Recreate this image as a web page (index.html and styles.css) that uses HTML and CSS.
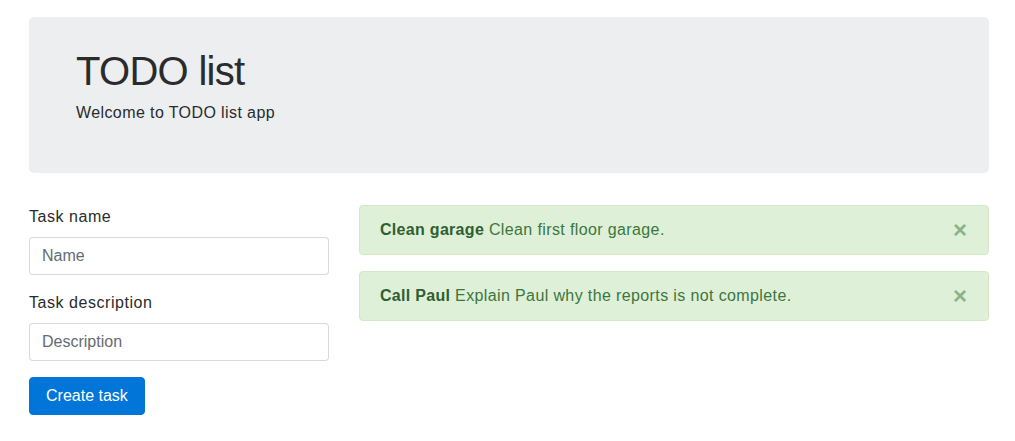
FILE: index.html
```html
<!DOCTYPE html>
<html lang="en">
<head>
<meta charset="utf-8">
<title>TODO list</title>
<link rel="stylesheet" href="styles.css">
</head>
<body>
<div class="container">
  <header class="jumbotron">
    <h1 class="title">TODO list</h1>
    <p class="lead">Welcome to TODO list app</p>
  </header>
  <div class="row">
    <form class="task-form">
      <div class="form-group">
        <label class="label" for="name">Task name</label>
        <input class="input" id="name" type="text" placeholder="Name">
      </div>
      <div class="form-group">
        <label class="label" for="desc">Task description</label>
        <input class="input" id="desc" type="text" placeholder="Description">
      </div>
      <button class="btn" type="button">Create task</button>
    </form>
    <div class="tasks">
      <div class="alert">
        <span class="alert-text"><strong>Clean garage</strong> Clean first floor garage.</span>
        <button class="close" type="button" aria-label="Close">×</button>
      </div>
      <div class="alert">
        <span class="alert-text"><strong>Call Paul</strong> Explain Paul why the reports is not complete.</span>
        <button class="close" type="button" aria-label="Close">×</button>
      </div>
    </div>
  </div>
</div>
</body>
</html>
```

FILE: styles.css
```css
* { box-sizing: border-box; }
html, body {
  margin: 0;
  padding: 0;
  background: #fff;
}
body {
  font-family: "Liberation Sans", Arial, sans-serif;
  font-size: 16px;
  line-height: 1.5;
  color: #292b2c;
}
.container {
  width: 960px;
  margin-left: 29px;
  padding-top: 17px;
}
.jumbotron {
  background: #eceeef;
  border-radius: 5px;
  padding: 32px 47px;
  margin-bottom: 32px;
}
.title {
  margin: 0 0 8px;
  font-size: 40px;
  font-weight: 400;
  line-height: 1.1;
  letter-spacing: -0.7px;
  color: #292b2c;
}
.lead {
  margin: 0 0 16px;
  font-size: 16px;
  letter-spacing: 0.4px;
}
.row {
  display: flex;
  gap: 30px;
  align-items: flex-start;
}
.task-form {
  width: 300px;
  flex: none;
}
.form-group {
  margin-bottom: 16px;
}
.label {
  display: block;
  margin-bottom: 8px;
  letter-spacing: 0.55px;
}
.input {
  display: block;
  width: 100%;
  height: 38px;
  padding: 8px 12px;
  font: inherit;
  font-size: 16px;
  line-height: 1.25;
  color: #464a4c;
  background: #fff;
  border: 1px solid rgba(0, 0, 0, 0.15);
  border-radius: 4px;
}
.input::placeholder {
  color: #636c72;
  opacity: 1;
}
.btn {
  display: inline-block;
  height: 38px;
  padding: 8px 16px;
  font: inherit;
  font-size: 16px;
  line-height: 1.25;
  color: #fff;
  background: #0275d8;
  border: 1px solid #0275d8;
  border-radius: 4px;
  cursor: pointer;
}
.tasks {
  flex: 1;
}
.alert {
  display: flex;
  align-items: center;
  justify-content: space-between;
  padding: 12px 20px;
  margin-bottom: 16px;
  background: #dff0d8;
  border: 1px solid #d0e9c6;
  border-radius: 4px;
  color: #3c763d;
}
.alert-text {
  letter-spacing: 0.38px;
}
.alert-text strong {
  font-weight: 700;
  color: #2f5f30;
  letter-spacing: 0.3px;
}
.close {
  padding: 0;
  margin-right: 1px;
  background: none;
  border: 0;
  font-family: inherit;
  font-size: 24px;
  font-weight: 700;
  line-height: 1;
  color: #3c763d;
  opacity: 0.5;
  cursor: pointer;
}
```
